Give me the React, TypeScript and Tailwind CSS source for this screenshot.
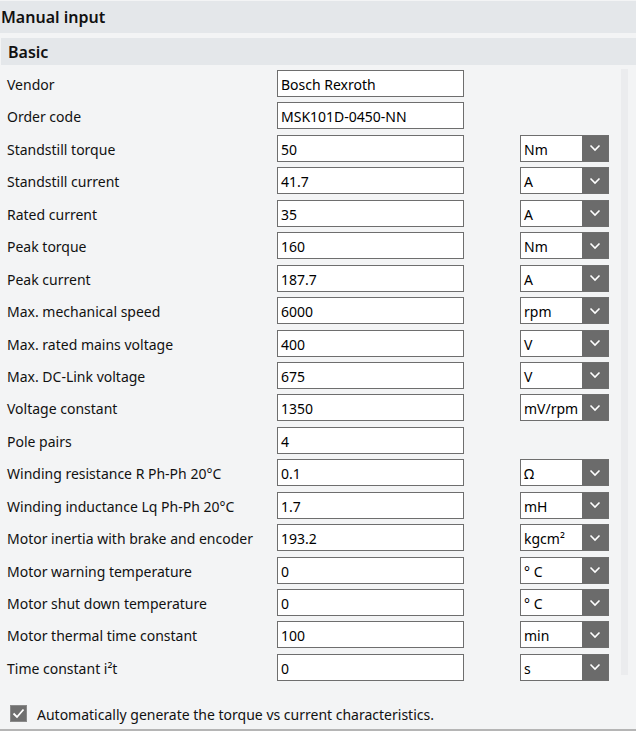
import React from "react";

type Row = { label: React.ReactNode; value: string; unit?: string };

const rows: Row[] = [
  { label: "Vendor", value: "Bosch Rexroth" },
  { label: "Order code", value: "MSK101D-0450-NN" },
  { label: "Standstill torque", value: "50", unit: "Nm" },
  { label: "Standstill current", value: "41.7", unit: "A" },
  { label: "Rated current", value: "35", unit: "A" },
  { label: "Peak torque", value: "160", unit: "Nm" },
  { label: "Peak current", value: "187.7", unit: "A" },
  { label: "Max. mechanical speed", value: "6000", unit: "rpm" },
  { label: "Max. rated mains voltage", value: "400", unit: "V" },
  { label: "Max. DC-Link voltage", value: "675", unit: "V" },
  { label: "Voltage constant", value: "1350", unit: "mV/rpm" },
  { label: "Pole pairs", value: "4" },
  { label: "Winding resistance R Ph-Ph 20°C", value: "0.1", unit: "Ω" },
  { label: "Winding inductance Lq Ph-Ph 20°C", value: "1.7", unit: "mH" },
  { label: "Motor inertia with brake and encoder", value: "193.2", unit: "kgcm²" },
  { label: "Motor warning temperature", value: "0", unit: "° C" },
  { label: "Motor shut down temperature", value: "0", unit: "° C" },
  { label: "Motor thermal time constant", value: "100", unit: "min" },
  { label: "Time constant i²t", value: "0", unit: "s" },
];

function Chevron() {
  return (
    <svg width="12" height="8" viewBox="0 0 12 8" fill="none">
      <path d="M1.5 1.5 L6 6 L10.5 1.5" stroke="white" strokeWidth="1.6" />
    </svg>
  );
}

function UnitSelect({ unit }: { unit: string }) {
  return (
    <div className="flex h-[27px] w-[89px] border border-[#6e6e6e] bg-white">
      <div className="flex flex-1 items-center pt-[2px] pl-[3px] text-[14px] text-black">{unit}</div>
      <div className="flex w-[26px] items-center justify-center bg-[#6b6b6b]">
        <Chevron />
      </div>
    </div>
  );
}

export default function App() {
  return (
    <div
      className="flex h-[731px] w-[636px] flex-col overflow-hidden bg-[#f3f4f5] text-[#111]"
      style={{ fontFamily: '"Noto Sans", "Open Sans", sans-serif' }}
    >
      <div className="mt-px flex h-[32px] items-center bg-[#e4e7ea] pl-[1px] text-[16px] font-semibold">
        Manual input
      </div>
      <div className="mt-[5px] ml-px flex h-[27px] items-center bg-[#e4e7ea] pt-px pl-[7px] text-[16px] font-semibold">
        Basic
      </div>
      <div className="flex flex-1">
        <div className="flex w-[621px] flex-col pt-[5px]">
          {rows.map((r, i) => (
            <div key={i} className="flex h-[32.44px] shrink-0 items-start">
              <div className="flex h-[27px] w-[277px] items-center pt-[2px] pl-[7px] text-[14px]">
                {r.label}
              </div>
              <div className="flex h-[27px] w-[187px] items-center border border-[#6e6e6e] bg-white pt-[2px] pl-[3px] text-[14px] text-black">
                {r.value}
              </div>
              <div className="ml-[56px]">{r.unit && <UnitSelect unit={r.unit} />}</div>
            </div>
          ))}
          <div className="mt-[16px] flex items-center pl-[10px]">
            <div className="flex h-[17px] w-[17px] items-center justify-center border border-[#8a8a8a] bg-[#6f6f6f]">
              <svg width="13" height="11" viewBox="0 0 13 11" fill="none">
                <path d="M1.5 5.5 L5 9 L11.5 1.5" stroke="white" strokeWidth="1.8" />
              </svg>
            </div>
            <span className="ml-[10px] pt-[2px] text-[14px]">
              Automatically generate the torque vs current characteristics.
            </span>
          </div>
        </div>
        <div className="mt-[4px] h-[606px] w-[7px] bg-[#ebecee]" />
      </div>
      <div className="h-[2px] bg-[#b5b5b5]" />
    </div>
  );
}
